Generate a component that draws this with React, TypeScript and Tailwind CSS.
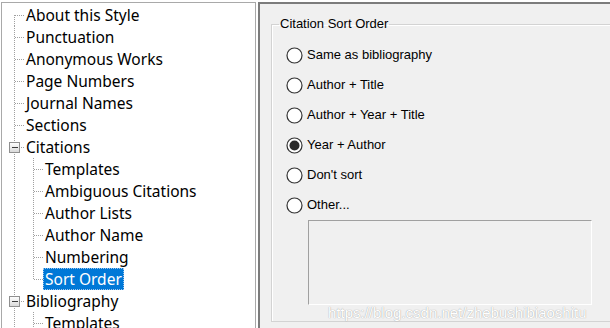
import React from 'react';

interface TreeItem {
  label: string;
  level: 0 | 1;
  first?: boolean;
  expander?: boolean;
  lastChild?: boolean;
  selected?: boolean;
}

const treeItems: TreeItem[] = [
  { label: 'About this Style', level: 0, first: true },
  { label: 'Punctuation', level: 0 },
  { label: 'Anonymous Works', level: 0 },
  { label: 'Page Numbers', level: 0 },
  { label: 'Journal Names', level: 0 },
  { label: 'Sections', level: 0 },
  { label: 'Citations', level: 0, expander: true },
  { label: 'Templates', level: 1 },
  { label: 'Ambiguous Citations', level: 1 },
  { label: 'Author Lists', level: 1 },
  { label: 'Author Name', level: 1 },
  { label: 'Numbering', level: 1 },
  { label: 'Sort Order', level: 1, lastChild: true, selected: true },
  { label: 'Bibliography', level: 0, expander: true },
  { label: 'Templates', level: 1 },
];

const sortOptions = [
  'Same as bibliography',
  'Author + Title',
  'Author + Year + Title',
  'Year + Author',
  "Don't sort",
  'Other...',
];

const DOT = '#a0a0a0';

// connector lines for one tree row (22px tall)
const TreeGutter: React.FC<{ item: TreeItem }> = ({ item }) => {
  const width = item.level === 0 ? 22 : 41;
  return (
    <svg width={width} height={22} className="shrink-0" shapeRendering="crispEdges">
      <line x1={12.5} y1={item.first ? 11 : 0} x2={12.5} y2={22} stroke={DOT} strokeDasharray="1 1" />
      {item.level === 0 && (
        <line x1={13} y1={11.5} x2={22} y2={11.5} stroke={DOT} strokeDasharray="1 1" />
      )}
      {item.level === 1 && (
        <>
          <line x1={31.5} y1={0} x2={31.5} y2={item.lastChild ? 12 : 22} stroke={DOT} strokeDasharray="1 1" />
          <line x1={32} y1={11.5} x2={41} y2={11.5} stroke={DOT} strokeDasharray="1 1" />
        </>
      )}
      {item.expander && (
        <>
          <defs>
            <linearGradient id="exp" x1="0" y1="0" x2="0" y2="1">
              <stop offset="0" stopColor="#ffffff" />
              <stop offset="1" stopColor="#d8d8d8" />
            </linearGradient>
          </defs>
          <rect x={7.5} y={6.5} width={10} height={10} fill="url(#exp)" stroke="#8f8f8f" />
          <line x1={9.5} y1={11.5} x2={15.5} y2={11.5} stroke="#3c3c3c" />
        </>
      )}
    </svg>
  );
};

const Radio: React.FC<{ checked?: boolean }> = ({ checked }) => (
  <svg width={17} height={17} className="shrink-0">
    <circle cx={8.5} cy={8.5} r={7.5} fill="#ffffff" stroke="#333333" strokeWidth={1.2} />
    {checked && <circle cx={8.5} cy={8.5} r={5} fill="#2b2b2b" />}
  </svg>
);

export default function App() {
  return (
    <div className="relative w-[610px] h-[328px] overflow-hidden bg-white flex pt-[2px] pl-[1px]">
      {/* style tree */}
      <div className="w-[255px] shrink-0 border-l border-t border-r border-[#a9a9a9] bg-white pt-[1px] font-['Noto_Sans',sans-serif] text-[15.5px] text-black">
        {treeItems.map((item, i) => (
          <div key={i} className="flex h-[22px] items-center">
            <TreeGutter item={item} />
            <span
              className={
                item.selected
                  ? 'px-[2px] leading-[22px] whitespace-nowrap bg-[#0078d7] text-white outline-1 outline-dotted outline-[#9ec5ec] -outline-offset-1'
                  : 'px-[2px] leading-[22px] whitespace-nowrap'
              }
            >
              {item.label}
            </span>
          </div>
        ))}
      </div>

      {/* property page */}
      <div className="ml-[2px] flex-1 border-l-2 border-t-2 border-[#7c7c7c] bg-[#f0f0f0] pl-[11px] pt-[12px] font-['Liberation_Sans',Arial,sans-serif] text-[13px] text-black">
        <fieldset className="w-[360px] border border-[#d3d3d3] shadow-[inset_1px_1px_0_#ffffff] pl-[7px] pb-[16px]">
          <legend className="px-[1px] leading-[16px]">Citation Sort Order</legend>
          <div className="mt-[8px] flex flex-col">
            {sortOptions.map((opt, i) => (
              <div key={opt} className="flex h-[30px] items-center gap-[4px] pl-[7px]">
                <Radio checked={i === 3} />
                <span className="whitespace-nowrap">{opt}</span>
              </div>
            ))}
          </div>
          <div className="ml-[29px] h-[85px] w-[284px] border-t border-l border-[#a0a0a0] border-r border-b border-r-white border-b-white bg-[#f0f0f0]" />
        </fieldset>
      </div>

      <span className="absolute left-[328px] top-[302px] font-['Liberation_Sans',Arial,sans-serif] text-[15px] text-white [text-shadow:0_0_1px_#8a8a8a]">
        https://blog.csdn.net/zhebushibiaoshitu
      </span>
    </div>
  );
}
